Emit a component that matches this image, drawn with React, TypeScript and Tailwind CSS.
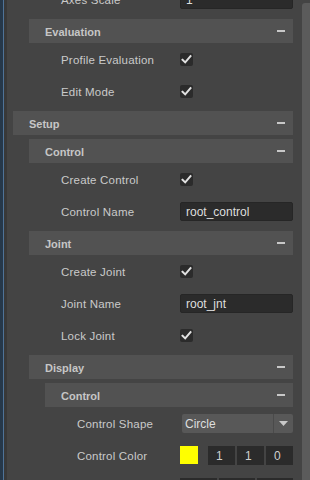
import React from "react";

const font = { fontFamily: '"Liberation Sans", Arial, sans-serif' };

function Header({ title }: { title: string }) {
  return (
    <div className="h-6 bg-[#525252] flex items-center justify-between pl-4 pr-2">
      <span className="text-[11px] font-bold text-[#c6c6c6] leading-none mt-[2px]">{title}</span>
      <div className="w-2 h-[2px] bg-[#c8c8c8]" />
    </div>
  );
}

function Frame({ title, children }: { title: string; children?: React.ReactNode }) {
  return (
    <div className="mt-1">
      <Header title={title} />
      <div>{children}</div>
    </div>
  );
}

function Row({
  label,
  level = 1,
  children,
}: {
  label: string;
  level?: 1 | 2;
  children?: React.ReactNode;
}) {
  return (
    <div className="h-8 flex items-center">
      <div
        className={
          level === 2
            ? "w-[135px] shrink-0 pl-8 pt-[3px] text-[11.5px] text-[#cacaca] tracking-[0.2px] whitespace-nowrap"
            : "w-[151px] shrink-0 pl-8 pt-[3px] text-[11.5px] text-[#cacaca] tracking-[0.2px] whitespace-nowrap"
        }
      >
        {label}
      </div>
      <div className="flex-1 flex items-center">{children}</div>
    </div>
  );
}

function Check() {
  return (
    <div className="w-[13px] h-[13px] rounded-[2px] bg-[#2b2b2b] flex items-center justify-center">
      <svg width="11" height="11" viewBox="0 0 11 11">
        <polyline
          points="1.5,5.8 4.2,8.4 9.5,2.2"
          fill="none"
          stroke="#e2e2e2"
          strokeWidth="2"
          strokeLinecap="square"
        />
      </svg>
    </div>
  );
}

function Input({ value }: { value: string }) {
  return (
    <div className="w-[113px] h-[19px] rounded-[2px] bg-[#2b2b2b] border border-[#262626] flex items-center pl-[5px] pt-[1px] text-[12px] text-[#dedede]">
      {value}
    </div>
  );
}

function NumBox({ value, w }: { value: string; w: string }) {
  return (
    <div className={w + " h-[19px] bg-[#2b2b2b] flex items-center pl-[8px] pt-[1px] text-[12px] text-[#d0d0d0]"}>
      {value}
    </div>
  );
}

export default function App() {
  return (
    <div className="w-[310px] h-[480px] overflow-hidden bg-[#444444] flex" style={font}>
      <div className="w-[7px] shrink-0 flex">
        <div className="w-[3px] bg-[#26384a]" />
        <div className="w-[1px] bg-[#4f7398]" />
        <div className="w-[3px] bg-[#393939]" />
      </div>
      <div className="flex-1 pl-[6px] pr-[9px] overflow-hidden">
        <div className="-mt-[17px]">
          <div className="pl-4">
            <Row label="Axes Scale">
              <Input value="1" />
            </Row>
            <Frame title="Evaluation">
              <Row label="Profile Evaluation">
                <Check />
              </Row>
              <Row label="Edit Mode">
                <Check />
              </Row>
            </Frame>
          </div>
          <Frame title="Setup">
            <div className="pl-4">
              <Frame title="Control">
                <Row label="Create Control">
                  <Check />
                </Row>
                <Row label="Control Name">
                  <Input value="root_control" />
                </Row>
              </Frame>
              <Frame title="Joint">
                <Row label="Create Joint">
                  <Check />
                </Row>
                <Row label="Joint Name">
                  <Input value="root_jnt" />
                </Row>
                <Row label="Lock Joint">
                  <Check />
                </Row>
              </Frame>
              <Frame title="Display">
                <div className="pl-4">
                  <Frame title="Control">
                    <Row label="Control Shape" level={2}>
                      <div className="ml-[2px] w-[111px] h-[19px] rounded-[2px] bg-[#585858] flex items-center">
                        <div className="flex-1 pl-[3px] pt-[1px] text-[12px] text-[#dedede]">Circle</div>
                        <div className="w-[1px] h-full bg-[#4a4a4a]" />
                        <div className="w-[19px] flex items-center justify-center">
                          <svg width="9" height="5" viewBox="0 0 9 5">
                            <polygon points="0,0 9,0 4.5,5" fill="#c8c8c8" />
                          </svg>
                        </div>
                      </div>
                    </Row>
                    <Row label="Control Color" level={2}>
                      <div className="w-[18px] h-[18px] bg-[#ffff00]" />
                      <div className="ml-[10px] flex gap-[2px]">
                        <NumBox value="1" w="w-[27px]" />
                        <NumBox value="1" w="w-[27px]" />
                        <NumBox value="0" w="w-[27px]" />
                      </div>
                    </Row>
                    <Row label="" level={2}>
                      <div className="flex gap-[2px]">
                        <div className="w-[37px] h-[19px] bg-[#2b2b2b]" />
                        <div className="w-[36px] h-[19px] bg-[#2b2b2b]" />
                        <div className="w-[36px] h-[19px] bg-[#2b2b2b]" />
                      </div>
                    </Row>
                  </Frame>
                </div>
              </Frame>
            </div>
          </Frame>
        </div>
      </div>
      <div className="w-[8px] shrink-0 pt-[3px]">
        <div className="h-full bg-[#5b5b5b] rounded-tl-[3px]" />
      </div>
    </div>
  );
}
